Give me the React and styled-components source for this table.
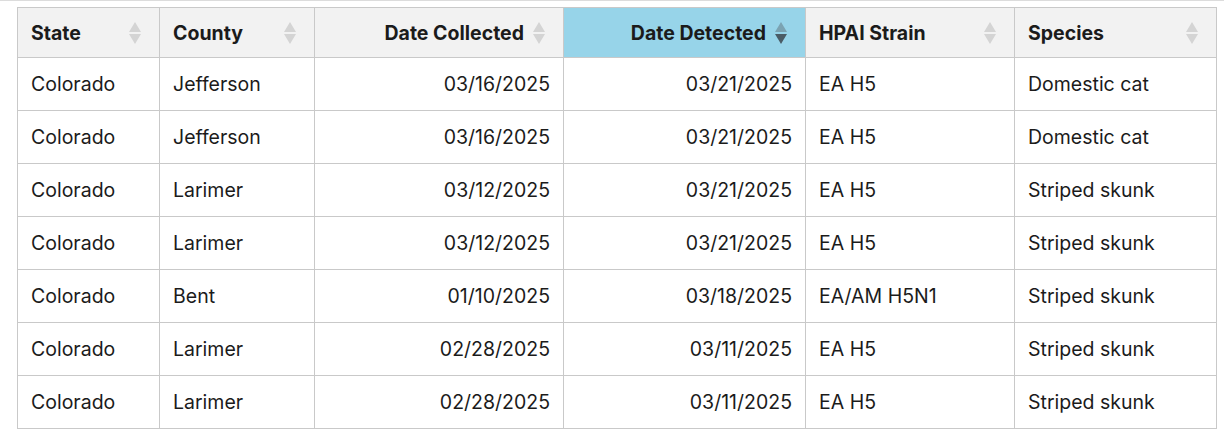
import React from "react";
import styled, { createGlobalStyle } from "styled-components";

const GlobalStyle = createGlobalStyle`
  html, body {
    margin: 0;
    padding: 0;
    background: #ffffff;
  }
  body {
    font-family: Inter, "Noto Sans", "Liberation Sans", sans-serif;
    color: #1b1b1b;
  }
`;

const columns = [
  { key: "state", label: "State", width: 142, align: "left" },
  { key: "county", label: "County", width: 155, align: "left" },
  { key: "collected", label: "Date Collected", width: 249, align: "right" },
  { key: "detected", label: "Date Detected", width: 242, align: "right", sorted: true },
  { key: "strain", label: "HPAI Strain", width: 209, align: "left" },
  { key: "species", label: "Species", width: 202, align: "left" },
];

const rows = [
  ["Colorado", "Jefferson", "03/16/2025", "03/21/2025", "EA H5", "Domestic cat"],
  ["Colorado", "Jefferson", "03/16/2025", "03/21/2025", "EA H5", "Domestic cat"],
  ["Colorado", "Larimer", "03/12/2025", "03/21/2025", "EA H5", "Striped skunk"],
  ["Colorado", "Larimer", "03/12/2025", "03/21/2025", "EA H5", "Striped skunk"],
  ["Colorado", "Bent", "01/10/2025", "03/18/2025", "EA/AM H5N1", "Striped skunk"],
  ["Colorado", "Larimer", "02/28/2025", "03/11/2025", "EA H5", "Striped skunk"],
  ["Colorado", "Larimer", "02/28/2025", "03/11/2025", "EA H5", "Striped skunk"],
];

const SortIcon = ({ active }) => (
  <SortSvg width="12" height="22" viewBox="0 0 12 22">
    <path d="M6 0 L12 10 L0 10 Z" fill={active ? "#7ba3b2" : "#d4d4d4"} />
    <path d="M0 12 L12 12 L6 22 Z" fill={active ? "#4a5c66" : "#d4d4d4"} />
  </SortSvg>
);

const App = () => (
  <Page>
    <GlobalStyle />
    <Table>
      <colgroup>
        {columns.map((c) => (
          <col key={c.key} style={{ width: c.width }} />
        ))}
      </colgroup>
      <thead>
        <tr>
          {columns.map((c) => (
            <HeadCell key={c.key} sorted={c.sorted}>
              <HeadInner>
                <HeadLabel align={c.align}>{c.label}</HeadLabel>
                <SortIcon active={c.sorted} />
              </HeadInner>
            </HeadCell>
          ))}
        </tr>
      </thead>
      <tbody>
        {rows.map((r, i) => (
          <tr key={i}>
            {r.map((v, j) => (
              <Cell key={j} align={columns[j].align}>
                {v}
              </Cell>
            ))}
          </tr>
        ))}
      </tbody>
    </Table>
  </Page>
);

export default App;

const Page = styled.div`
  border-top: 1px solid #dcdcdc;
  padding: 6px 8px 0 17px;
  height: 431px;
  overflow: hidden;
`;

const Table = styled.table`
  border-collapse: collapse;
  table-layout: fixed;
  width: 1199px;
  font-size: 19.5px;
`;

const HeadCell = styled.th`
  background: ${({ sorted }) => (sorted ? "#97d4e9" : "#f2f2f2")};
  border: 1px solid #c9c9c9;
  height: 50px;
  padding: 0 18px 0 13px;
  font-weight: 700;
  box-sizing: border-box;
`;

const HeadInner = styled.div`
  display: flex;
  align-items: center;
  gap: 9px;
`;

const HeadLabel = styled.span`
  flex: 1;
  text-align: ${({ align }) => align};
  white-space: nowrap;
`;

const SortSvg = styled.svg`
  flex: none;
  display: block;
`;

const Cell = styled.td`
  border: 1px solid #c9c9c9;
  height: 53px;
  padding: 0 13px;
  text-align: ${({ align }) => align};
  white-space: nowrap;
  box-sizing: border-box;
  font-weight: 400;
`;
